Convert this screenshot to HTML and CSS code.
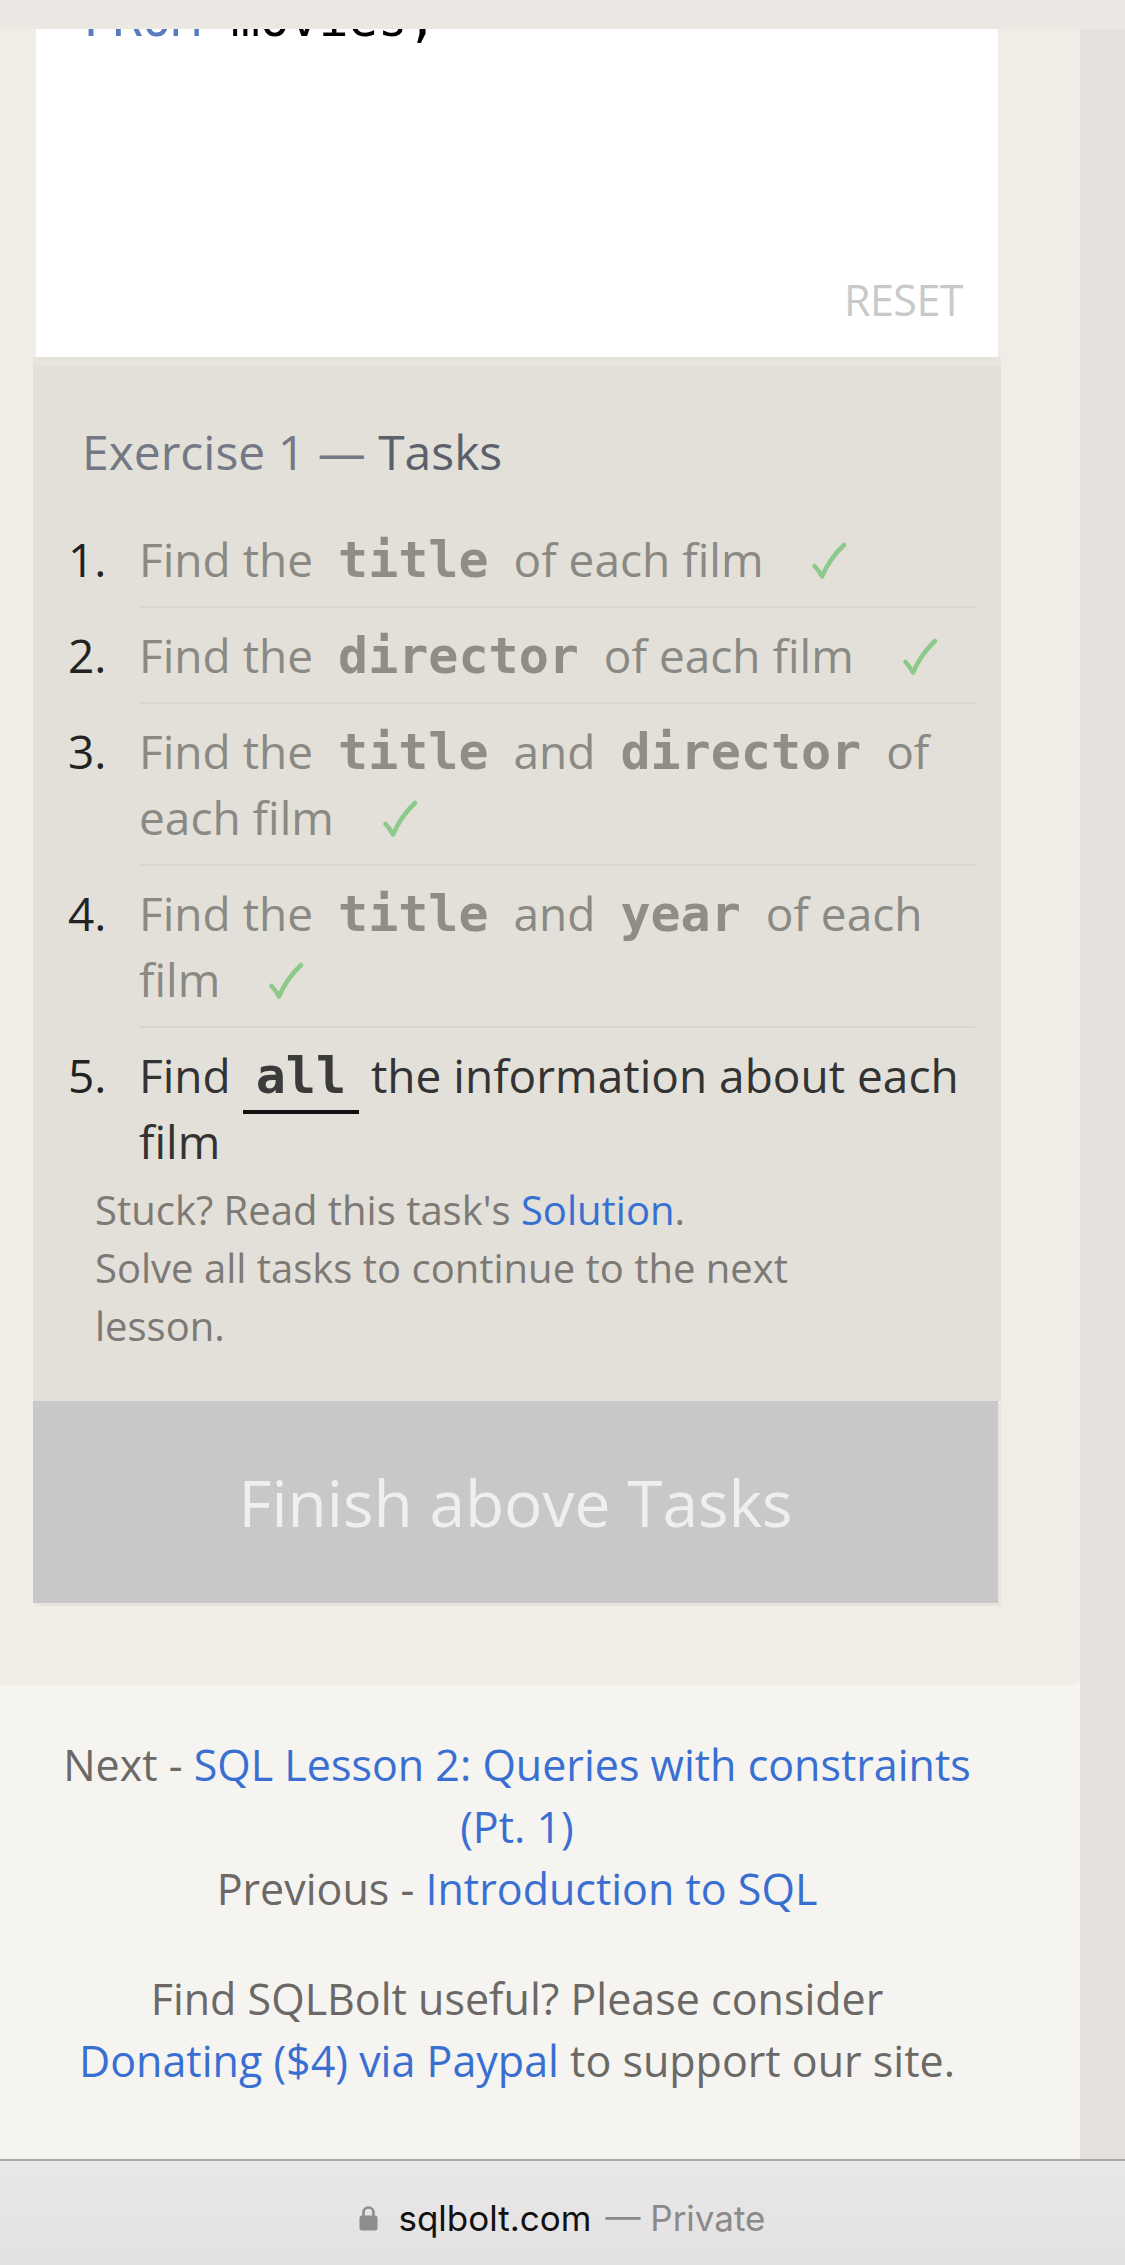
FILE: index.html
```html
<!DOCTYPE html>
<html lang="en">
<head>
<meta charset="utf-8">
<title>SQLBolt - Lesson 1</title>
<link rel="stylesheet" href="styles.css">
</head>
<body>
<div class="topbar"></div>
<div class="page">
  <div class="column">
    <main class="lesson">
      <div class="card">
        <div class="editor">
          <pre class="code-line"><span class="kw">FROM</span> movies;</pre>
          <div class="reset">RESET</div>
        </div>
        <section class="exercise">
          <h2 class="ex-title">Exercise 1 — <span class="tasks-word">Tasks</span></h2>
          <ol class="tasks">
            <li class="task done"><span class="num">1.</span><div class="body">Find the <code>title</code> of each film<svg class="check" width="36" height="38" viewBox="0 0 36 38" aria-hidden="true"><path d="M3.5 24 Q7.5 28 11 34.5 Q19 16 33 3"/></svg></div></li>
            <li class="task done"><span class="num">2.</span><div class="body">Find the <code>director</code> of each film<svg class="check" width="36" height="38" viewBox="0 0 36 38" aria-hidden="true"><path d="M3.5 24 Q7.5 28 11 34.5 Q19 16 33 3"/></svg></div></li>
            <li class="task done"><span class="num">3.</span><div class="body">Find the <code>title</code> and <code>director</code> of each film<svg class="check" width="36" height="38" viewBox="0 0 36 38" aria-hidden="true"><path d="M3.5 24 Q7.5 28 11 34.5 Q19 16 33 3"/></svg></div></li>
            <li class="task done"><span class="num">4.</span><div class="body">Find the <code>title</code> and <code>year</code> of each film<svg class="check" width="36" height="38" viewBox="0 0 36 38" aria-hidden="true"><path d="M3.5 24 Q7.5 28 11 34.5 Q19 16 33 3"/></svg></div></li>
            <li class="task current"><span class="num">5.</span><div class="body">Find <code class="active">all</code> the information about each film</div></li>
          </ol>
          <div class="stuck">
            <div>Stuck? Read this task's <a class="link" href="#">Solution</a>.</div>
            <div>Solve all tasks to continue to the next lesson.</div>
          </div>
        </section>
        <div class="finish">Finish above Tasks</div>
      </div>
    </main>
    <footer class="nav">
      <p class="nav-links">Next - <a class="link" href="#">SQL Lesson 2: Queries with constraints (Pt.&nbsp;1)</a><br>Previous - <a class="link" href="#">Introduction to SQL</a></p>
      <p class="donate">Find SQLBolt useful? Please consider <a class="link nowrap" href="#">Donating ($4) via Paypal</a> to support our site.</p>
    </footer>
  </div>
  <div class="side"></div>
</div>
<div class="urlbar">
  <svg class="lock" width="19" height="26" viewBox="0 0 19 26" aria-hidden="true">
    <path d="M4.5 11.5V7.5a5 5 0 0 1 10 0v4" fill="none" stroke="#8e8d8d" stroke-width="2.6"/>
    <rect x="0.5" y="10.5" width="18" height="15" rx="2.5" fill="#8e8d8d"/>
  </svg>
  <span class="host">sqlbolt.com</span><span class="private">— Private</span>
</div>
</body>
</html>
```

FILE: styles.css
```css
* { box-sizing: border-box; }

html, body {
  margin: 0;
  padding: 0;
}

body {
  width: 1125px;
  font-family: "Open Sans", "Noto Sans", sans-serif;
  background: #f5f4f0;
  position: relative;
}

.topbar {
  position: absolute;
  top: 0;
  left: 0;
  width: 1125px;
  height: 29px;
  background: #ebe8e4;
  z-index: 10;
}

.page {
  display: flex;
  height: 2159px;
}

.column {
  width: 1080px;
  background: #f5f4f0;
}

.side {
  flex: 1;
  background: #e3e0dd;
}

.lesson {
  background: #efede6;
  padding: 0 79px 79px 33px;
  border-bottom-right-radius: 8px;
}

.card {
  display: flex;
  flex-direction: column;
}

/* editor */
.editor {
  height: 357px;
  margin: 0 3px;
  background: #ffffff;
  display: flex;
  flex-direction: column;
  justify-content: space-between;
  padding: 0 35px 36px 47px;
  overflow: hidden;
}

.code-line {
  margin: -10px 0 0 0;
  font-family: "DejaVu Sans Mono", monospace;
  font-size: 49px;
  line-height: 60px;
  color: #000;
}

.kw { color: #5b7cbc; }

.reset {
  align-self: flex-end;
  font-size: 43px;
  line-height: 42px;
  color: #c9c9c9;
  letter-spacing: -0.5px;
}

/* exercise */
.exercise {
  background: linear-gradient(#e6e4dd 0, #e6e4dd 9px, #e2e0d8 9px);
  padding: 66px 26px 46px 35px;
}

.ex-title {
  margin: 0 0 31px 14px;
  font-weight: 400;
  font-size: 48px;
  line-height: 58px;
  color: #747884;
}

.tasks-word { color: #5c606c; }

.tasks {
  list-style: none;
  margin: 0;
  padding: 0;
}

.task {
  display: flex;
  font-size: 46px;
}

.num {
  width: 71px;
  flex: none;
  padding-top: 14px;
  line-height: 66px;
  color: #222;
}

.body {
  flex: 1;
  padding: 14px 0;
  line-height: 66px;
  border-bottom: 2px solid #d8d6cc;
  color: #8a8984;
}

.task.current .body {
  border-bottom: none;
  padding-bottom: 7px;
  color: #333;
}

code {
  font-family: "DejaVu Sans Mono", monospace;
  font-weight: 700;
  font-size: 50px;
  line-height: 0;
  padding: 0 13px;
  color: #8e8d88;
}

code.active {
  color: #3b3b3b;
  padding-bottom: 5px;
  border-bottom: 4px solid #111;
}

.check {
  margin-left: 48px;
  vertical-align: -3px;
}

.check path {
  fill: none;
  stroke: #8dc98b;
  stroke-width: 4.5;
  stroke-linecap: round;
  stroke-linejoin: round;
}

.stuck {
  margin-left: 27px;
  max-width: 760px;
  font-size: 40px;
  line-height: 58px;
  color: #7d7976;
}

.link {
  color: #3a6fd2;
  text-decoration: none;
}

.nowrap { white-space: nowrap; }

.finish {
  height: 202px;
  margin-right: 3px;
  background: #c8c8c8;
  color: #efefef;
  font-size: 64px;
  display: flex;
  align-items: center;
  justify-content: center;
  box-shadow: 3px 3px 0 #e6e4dd;
  margin-bottom: 3px;
}

/* footer nav */
.nav {
  padding: 49px 79px 67px 33px;
  text-align: center;
  font-size: 43px;
  line-height: 62px;
  color: #6b6866;
}

.nav p { margin: 0; }

.nav .donate { margin-top: 48px; }

/* bottom url bar */
.urlbar {
  height: 106px;
  border-top: 2px solid #a9a8a8;
  background: linear-gradient(#e9e7e7, #e3e1e1);
  display: flex;
  align-items: center;
  justify-content: center;
  padding-top: 10px;
  font-family: "Inter", "Open Sans", sans-serif;
  font-size: 35px;
}

.lock { margin-right: 20px; }

.host { color: #111; }

.private {
  color: #8a8a8a;
  margin-left: 14px;
}
```
